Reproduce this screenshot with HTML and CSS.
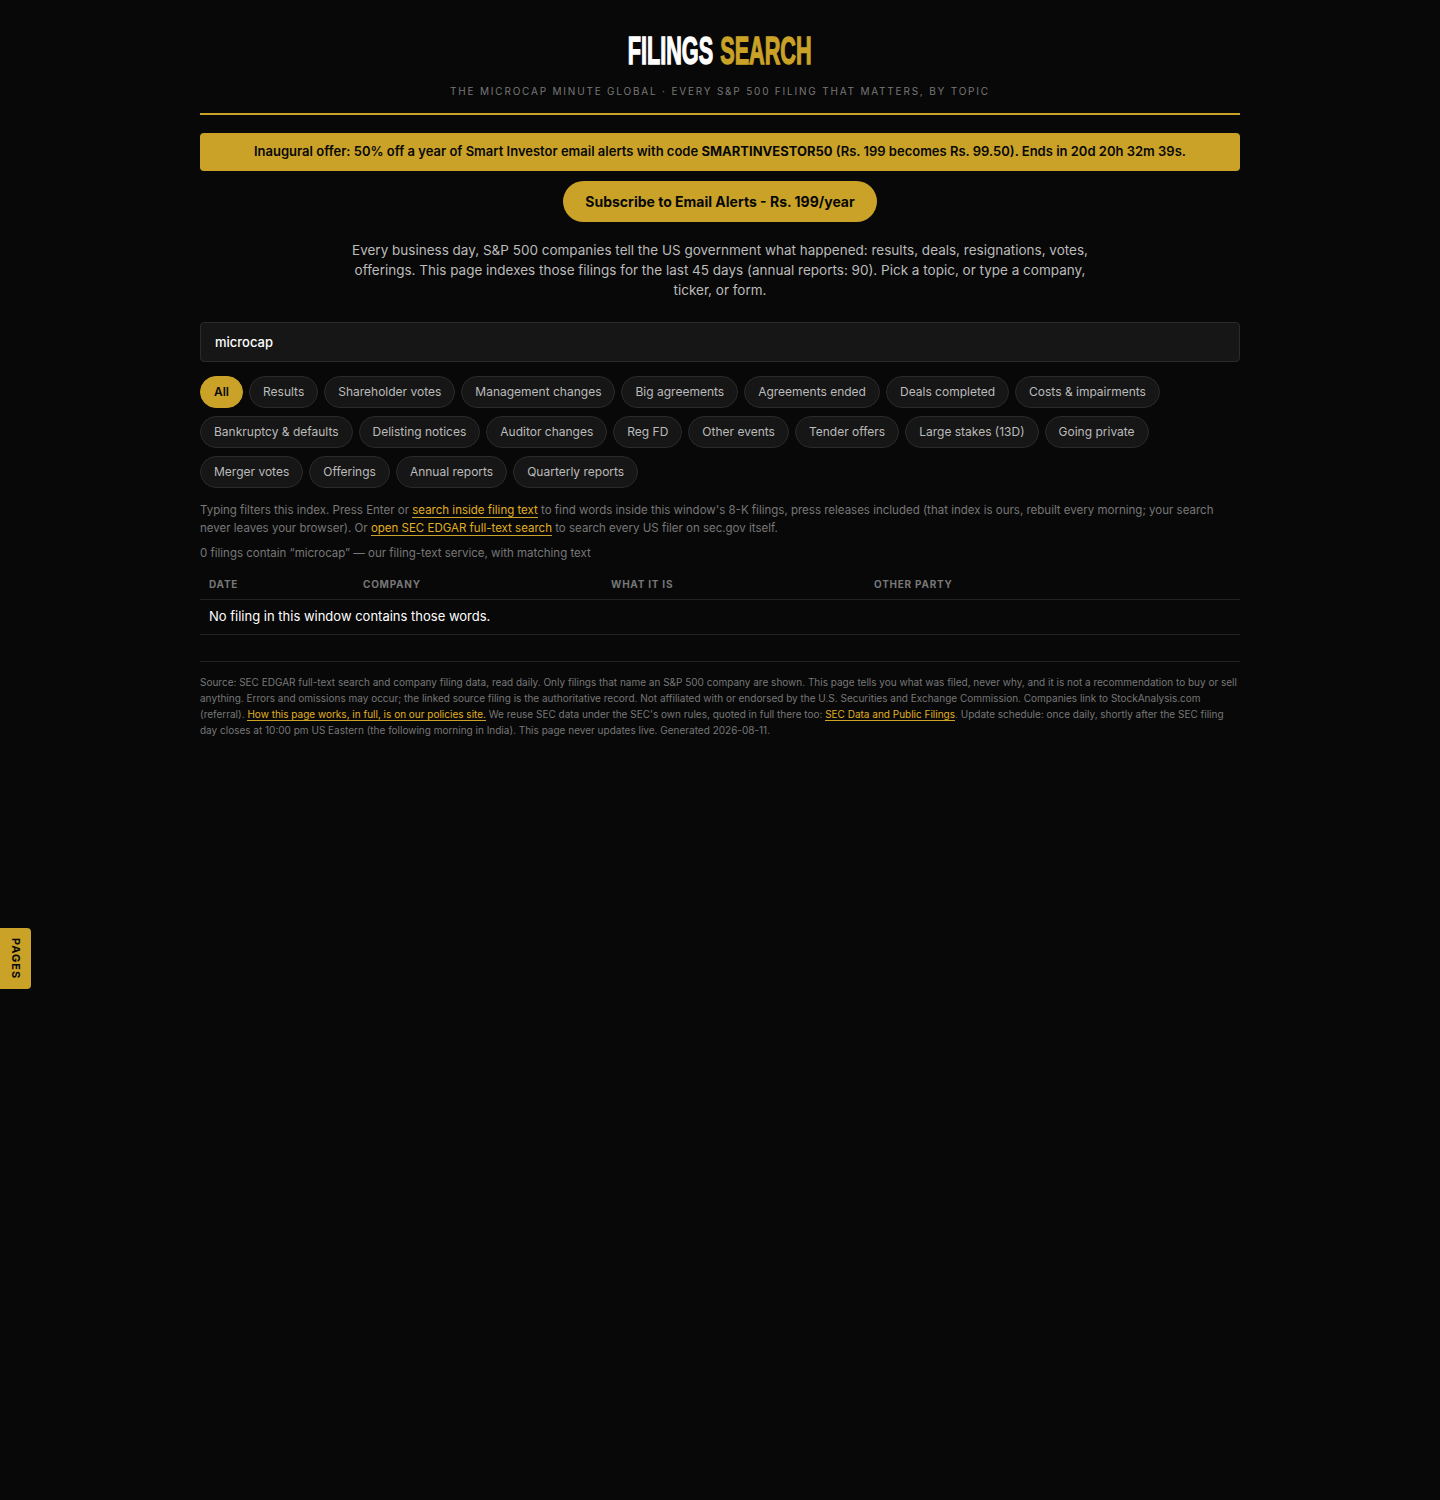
FILE: index.html
```html
<!DOCTYPE html>
<html lang="en">
<head>
<meta charset="utf-8">
<title>Filings Search</title>
<link rel="stylesheet" href="styles.css">
</head>
<body>
<main class="page">
  <header class="masthead">
    <h1 class="title"><span class="title-inner">FILINGS <em>SEARCH</em></span></h1>
    <p class="tagline">THE MICROCAP MINUTE GLOBAL · EVERY S&amp;P 500 FILING THAT MATTERS, BY TOPIC</p>
  </header>
  <div class="offer">Inaugural offer: 50% off a year of Smart Investor email alerts with code <b>SMARTINVESTOR50</b> (Rs. 199 becomes Rs. 99.50). Ends in 20d 20h 32m 39s.</div>
  <div class="cta-row"><a class="cta" href="#">Subscribe to Email Alerts - Rs. 199/year</a></div>
  <p class="intro">Every business day, S&amp;P 500 companies tell the US government what happened: results, deals, resignations, votes, offerings. This page indexes those filings for the last 45 days (annual reports: 90). Pick a topic, or type a company, ticker, or form.</p>
  <input class="search" type="text" value="microcap" aria-label="Search filings">
  <nav class="chips">
    <button class="chip active">All</button>
    <button class="chip">Results</button>
    <button class="chip">Shareholder votes</button>
    <button class="chip">Management changes</button>
    <button class="chip">Big agreements</button>
    <button class="chip">Agreements ended</button>
    <button class="chip">Deals completed</button>
    <button class="chip">Costs &amp; impairments</button>
    <button class="chip">Bankruptcy &amp; defaults</button>
    <button class="chip">Delisting notices</button>
    <button class="chip">Auditor changes</button>
    <button class="chip">Reg FD</button>
    <button class="chip">Other events</button>
    <button class="chip">Tender offers</button>
    <button class="chip">Large stakes (13D)</button>
    <button class="chip">Going private</button>
    <button class="chip">Merger votes</button>
    <button class="chip">Offerings</button>
    <button class="chip">Annual reports</button>
    <button class="chip">Quarterly reports</button>
  </nav>
  <p class="note">Typing filters this index. Press Enter or <a href="#">search inside filing text</a> to find words inside this window's 8-K filings, press releases included (that index is ours, rebuilt every morning; your search never leaves your browser). Or <a href="#">open SEC EDGAR full-text search</a> to search every US filer on sec.gov itself.</p>
  <p class="count">0 filings contain “microcap” — our filing-text service, with matching text</p>
  <table class="results">
    <thead>
      <tr><th class="c-date">DATE</th><th class="c-company">COMPANY</th><th class="c-what">WHAT IT IS</th><th>OTHER PARTY</th></tr>
    </thead>
    <tbody>
      <tr><td colspan="4">No filing in this window contains those words.</td></tr>
    </tbody>
  </table>
  <footer class="foot">Source: SEC EDGAR full-text search and company filing data, read daily. Only filings that name an S&amp;P 500 company are shown. This page tells you what was filed, never why, and it is not a recommendation to buy or sell anything. Errors and omissions may occur; the linked source filing is the authoritative record. Not affiliated with or endorsed by the U.S. Securities and Exchange Commission. Companies link to StockAnalysis.com (referral). <a href="#">How this page works, in full, is on our policies site.</a> We reuse SEC data under the SEC's own rules, quoted in full there too: <a href="#">SEC Data and Public Filings</a>. Update schedule: once daily, shortly after the SEC filing day closes at 10:00 pm US Eastern (the following morning in India). This page never updates live. Generated 2026-08-11.</footer>
</main>
<a class="pages-tab" href="#">PAGES</a>
</body>
</html>
```
FILE: styles.css
```css
* { box-sizing: border-box; }
html, body { margin: 0; padding: 0; }
body {
  min-height: 1500px;
  background: #080808;
  color: #fff;
  font-family: Inter, "Liberation Sans", sans-serif;
}
.page { width: 1040px; margin: 0 auto; padding-top: 32px; }
.masthead { border-bottom: 2px solid #c9a227; padding-bottom: 15px; text-align: center; }
.title {
  margin: 0;
  height: 38px;
  font-family: "Liberation Sans", sans-serif;
  font-size: 39px;
  line-height: 38px;
  font-weight: 700;
  color: #fff;
  letter-spacing: 0;
  word-spacing: 2px;
}
.title-inner { display: inline-block; transform: scaleX(0.555); -webkit-text-stroke: 1.4px currentColor; white-space: nowrap; }
.title em { font-style: normal; color: #c9a227; }
.tagline { margin: 14px 0 0; font-size: 10px; line-height: 14px; letter-spacing: 1.8px; color: #777; }
.offer {
  margin-top: 18px;
  height: 38px;
  background: #c9a227;
  border-radius: 4px;
  color: #080808;
  font-size: 13px;
  font-weight: 600;
  line-height: 37px;
  text-align: center;
}
.offer b { font-weight: 700; }
.cta-row { margin-top: 10px; display: flex; justify-content: center; }
.cta {
  display: block;
  height: 41px;
  padding: 0 22px;
  border-radius: 21px;
  background: #c9a227;
  color: #080808;
  font-size: 14px;
  font-weight: 700;
  line-height: 41px;
  text-decoration: none;
}
.intro {
  width: 760px;
  margin: 18px auto 0;
  font-size: 13.5px;
  line-height: 20px;
  text-align: center;
  color: #bbb;
}
.search {
  display: block;
  width: 100%;
  height: 40px;
  margin-top: 22px;
  padding: 0 14px 1px;
  background: #161616;
  border: 1px solid #2a2a2a;
  border-radius: 4px;
  color: #fff;
  font-family: inherit;
  font-size: 13px;
  font-weight: 500;
  outline: none;
}
.chips { display: flex; flex-wrap: wrap; gap: 8px 6px; margin-top: 14px; }
.chip {
  height: 32px;
  padding: 0 13px;
  background: #161616;
  border: 1px solid #2a2a2a;
  border-radius: 16px;
  color: #bbb;
  font-family: inherit;
  font-size: 12px;
  line-height: 30px;
}
.chip.active { background: #c9a227; border-color: #c9a227; color: #080808; font-weight: 600; }
.note { margin: 13px 0 0; font-size: 11.5px; line-height: 18px; color: #777; }
.note a, .foot a { color: #e0b020; text-decoration: none; border-bottom: 1px solid #c9a227; }
.count { margin: 7px 0 0; font-size: 11.5px; line-height: 18px; color: #777; }
.results { width: 100%; margin-top: 10px; border-collapse: collapse; table-layout: fixed; }
.results th {
  height: 27px;
  padding: 0 9px 2px;
  border-bottom: 1px solid #222;
  color: #777;
  font-size: 10px;
  font-weight: 700;
  letter-spacing: 0.75px;
  text-align: left;
}
.c-date { width: 154px; }
.c-company { width: 248px; }
.c-what { width: 263px; }
.results td {
  height: 35px;
  padding: 0 9px 2px;
  border-bottom: 1px solid #222;
  font-size: 13px;
  color: #fff;
}
.foot {
  margin-top: 26px;
  padding-top: 12px;
  border-top: 1px solid #222;
  font-size: 10px;
  line-height: 16px;
  color: #777;
}
.pages-tab {
  position: fixed;
  left: 0;
  top: 928px;
  width: 31px;
  height: 61px;
  display: flex;
  align-items: center;
  justify-content: center;
  background: #c9a227;
  border-radius: 0 4px 4px 0;
  color: #080808;
  font-size: 11px;
  font-weight: 700;
  letter-spacing: 1px;
  text-decoration: none;
  writing-mode: vertical-rl;
}
```
